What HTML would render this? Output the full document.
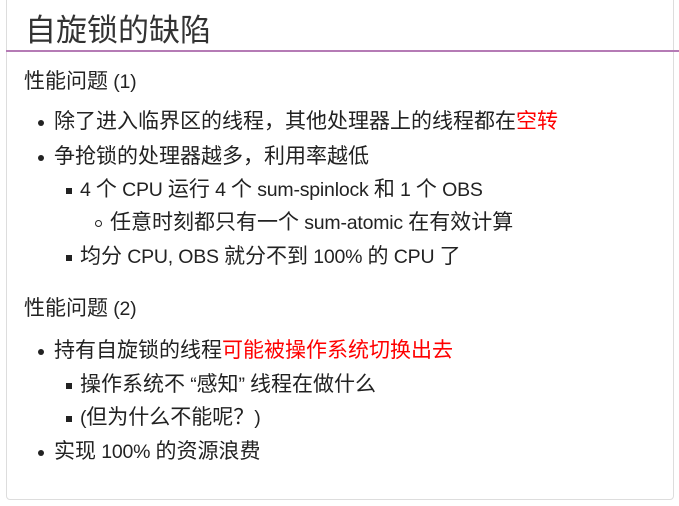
<!DOCTYPE html><html><head><meta charset="utf-8"><style>
body{margin:0;width:679px;height:506px;background:#fff;font-family:"Liberation Sans","Noto Sans CJK SC",sans-serif;color:#222;position:relative;overflow:hidden}
.card{position:absolute;left:6px;top:-4px;width:666px;height:502px;border:1px solid #ddd;border-radius:4px}
.t{position:absolute;left:25px;top:12px;font-size:31px;line-height:38px;color:#333}
.hr{position:absolute;left:6px;right:0;top:50px;height:2px;background:#b57bb5}
.l{position:absolute;font-size:21px;line-height:24px;white-space:nowrap}
.e{font-size:19.5px;letter-spacing:-0.2px}
.r{color:#f00}
.b1:before{content:"";position:absolute;left:-16px;top:10px;width:6px;height:6px;border-radius:50%;background:#222}
.b2:before{content:"";position:absolute;left:-14px;top:10px;width:6px;height:6px;background:#222}
.b3:before{content:"";position:absolute;left:-15px;top:9px;width:5px;height:5px;border-radius:50%;border:1px solid #222}
</style></head><body>
<div class="card"></div>
<div class="t">自旋锁的缺陷</div>
<div class="hr"></div>
<div class="l" style="left:24px;top:70px">性能问题<span class="e"> (1)</span></div>
<div class="l b1" style="left:54px;top:110px">除了进入临界区的线程，其他处理器上的线程都在<span class="r">空转</span></div>
<div class="l b1" style="left:54px;top:145px">争抢锁的处理器越多，利用率越低</div>
<div class="l b2" style="left:80px;top:178px"><span class="e">4 </span>个<span class="e"> CPU </span>运行<span class="e"> 4 </span>个<span class="e"> sum-spinlock </span>和<span class="e"> 1 </span>个<span class="e"> OBS</span></div>
<div class="l b3" style="left:110px;top:211px">任意时刻都只有一个<span class="e"> sum-atomic </span>在有效计算</div>
<div class="l b2" style="left:80px;top:245px">均分<span class="e"> CPU, OBS </span>就分不到<span class="e"> 100% </span>的<span class="e"> CPU </span>了</div>
<div class="l" style="left:24px;top:297px">性能问题<span class="e"> (2)</span></div>
<div class="l b1" style="left:54px;top:339px">持有自旋锁的线程<span class="r">可能被操作系统切换出去</span></div>
<div class="l b2" style="left:80px;top:373px">操作系统不<span class="e"> “</span>感知<span class="e">” </span>线程在做什么</div>
<div class="l b2" style="left:80px;top:406px"><span class="e">(</span>但为什么不能呢？<span class="e">)</span></div>
<div class="l b1" style="left:54px;top:440px">实现<span class="e"> 100% </span>的资源浪费</div>
</body></html>
